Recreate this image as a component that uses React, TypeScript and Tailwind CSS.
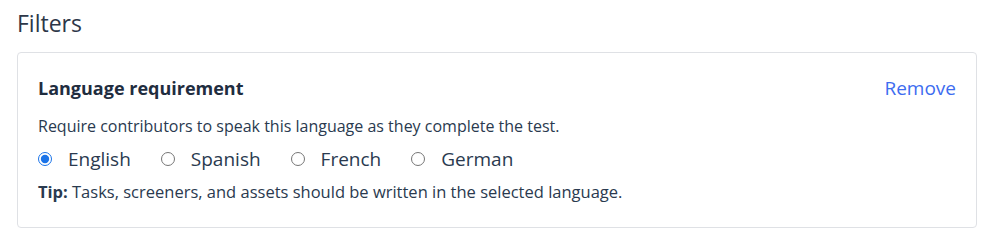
const languages = ['English', 'Spanish', 'French', 'German'];

export default function App() {
  return (
    <div className="bg-white pl-[17px] pr-[13px] pt-[7px] pb-[13px] font-['Open_Sans',sans-serif] text-[#2a3a4f]">
      <h2 className="text-[23px] leading-[32px] font-normal text-[#2d3748]">Filters</h2>
      <div className="mt-[13px] rounded-[4px] border border-[#dfe1e5] pl-[20px] pr-[20px] pt-[21px] pb-[24px]">
        <div className="flex items-center justify-between">
          <h3 className="text-[18px] leading-[28px] font-bold text-[#1f2d3f]">Language requirement</h3>
          <button type="button" className="text-[19px] leading-[28px] text-[#3d6cf0]">
            Remove
          </button>
        </div>
        <p className="mt-[12px] text-[16px] leading-[24px]">
          Require contributors to speak this language as they complete the test.
        </p>
        <div className="mt-[7px] flex items-center gap-[30px]">
          {languages.map((lang, i) => (
            <label key={lang} className="flex items-center gap-[16px] text-[19px] leading-[28px]">
              <input
                type="radio"
                name="language"
                defaultChecked={i === 0}
                className="m-0 h-[14px] w-[14px] accent-[#1a73e8]"
              />
              {lang}
            </label>
          ))}
        </div>
        <p className="mt-[8px] text-[16.5px] leading-[22px]">
          <span className="font-bold">Tip:</span> Tasks, screeners, and assets should be written in the selected
          language.
        </p>
      </div>
    </div>
  );
}
